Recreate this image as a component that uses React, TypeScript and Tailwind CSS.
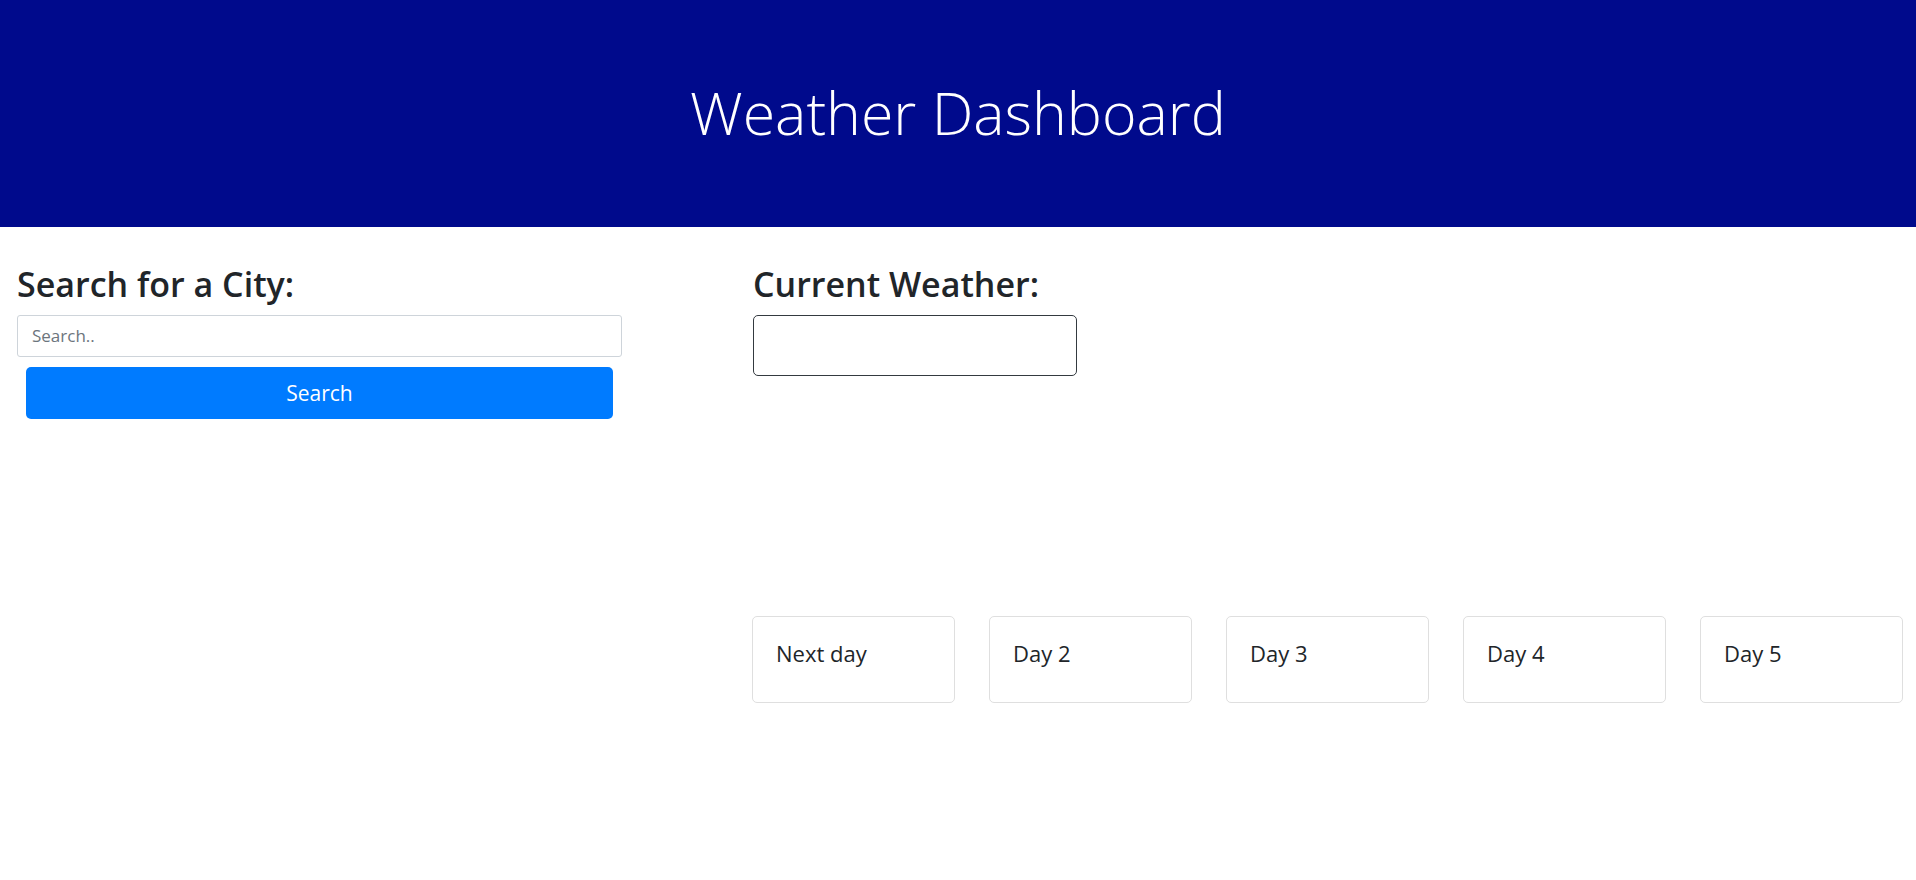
export default function App() {
  const days = ["Next day", "Day 2", "Day 3", "Day 4", "Day 5"];

  return (
    <div className="min-h-screen bg-white font-['Open_Sans',sans-serif] text-[#212529]">
      <header className="h-[227px] bg-[#000a8c] flex items-center justify-center">
        <h1 className="text-[59px] font-light text-white leading-[1.2] -mt-[2px]">
          Weather Dashboard
        </h1>
      </header>

      <main className="flex pt-[37px]">
        <section className="w-[639px] px-[17px]">
          <h2 className="text-[34px] font-semibold leading-[1.2] mb-[10px]">
            Search for a City:
          </h2>
          <input
            type="text"
            placeholder="Search.."
            className="block w-full h-[42px] px-[14px] text-[17px] border border-[#ced4da] rounded-[3px] placeholder:text-[#6c757d] outline-none"
          />
          <button className="block mx-[9px] w-[587px] h-[52px] mt-[10px] pt-[2px] bg-[#007bff] text-white text-[21px] rounded-[5px]">
            Search
          </button>
        </section>

        <section className="flex-1 pl-[113px] pr-[13px]">
          <h2 className="ml-px text-[34px] font-semibold leading-[1.2] mb-[10px]">
            Current Weather:
          </h2>
          <div className="ml-px w-[324px] h-[61px] border border-[#343a40] rounded-[5px]" />

          <div className="flex gap-[34px] mt-[240px]">
            {days.map((d) => (
              <div
                key={d}
                className="w-[203px] h-[87px] border border-[#dfdfdf] rounded-[5px] px-[23px] pt-[23px]"
              >
                <h5 className="text-[22px] font-medium leading-[1.2]">{d}</h5>
              </div>
            ))}
          </div>
        </section>
      </main>
    </div>
  );
}
